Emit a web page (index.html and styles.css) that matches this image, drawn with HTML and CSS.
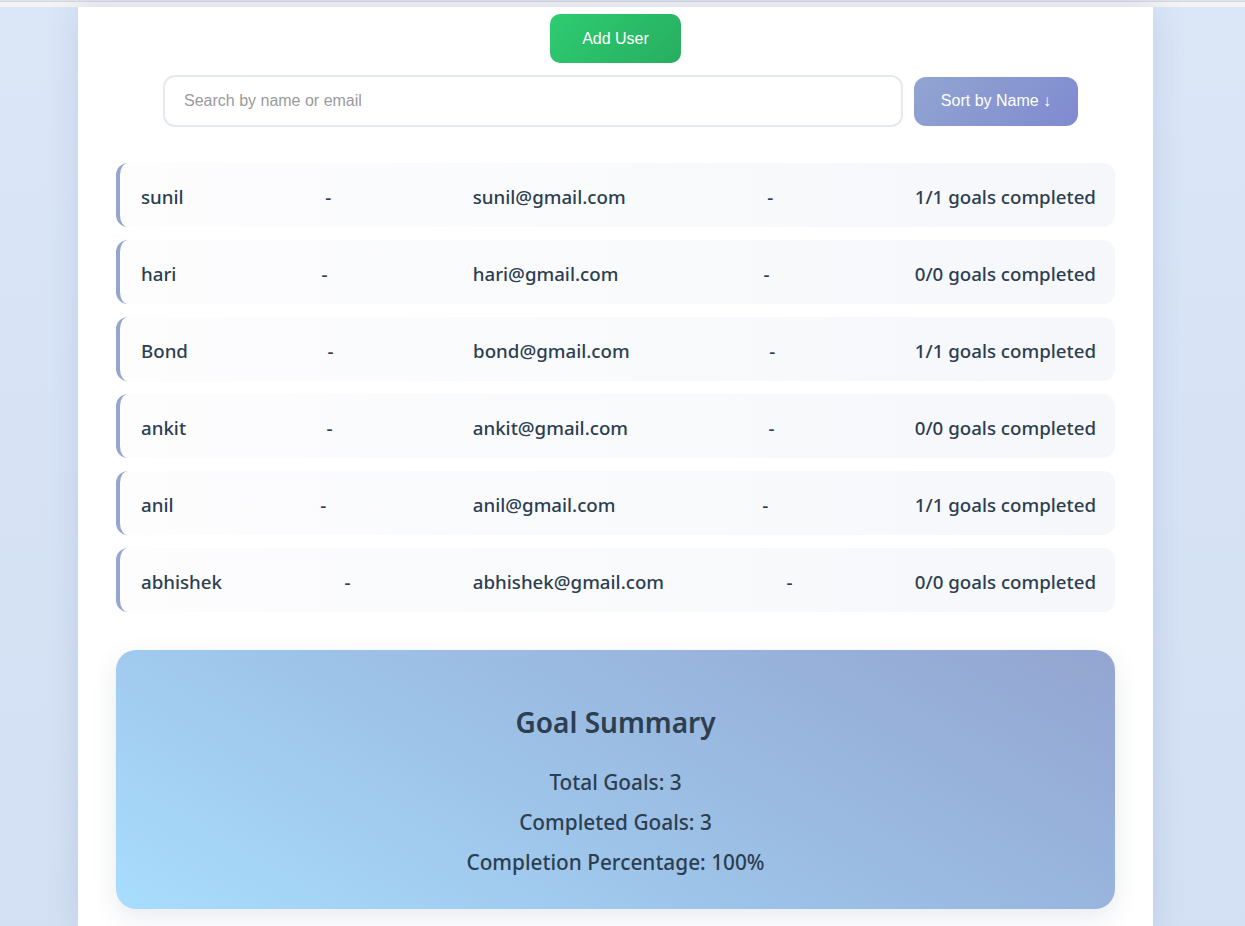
FILE: index.html
```html
<!DOCTYPE html>
<html>
<head>
<meta charset="utf-8">
<link rel="stylesheet" href="styles.css">
</head>
<body>
<div class="topbar"></div>
<div class="page">
  <main class="container">
    <div class="actions">
      <button class="add-btn">Add User</button>
    </div>
    <div class="search-row">
      <input class="search" type="text" placeholder="Search by name or email">
      <button class="sort-btn">Sort by Name ↓</button>
    </div>
    <ul class="users">
      <li class="user"><span>sunil</span><span>-</span><span>sunil@gmail.com</span><span>-</span><span>1/1 goals completed</span></li>
      <li class="user"><span>hari</span><span>-</span><span>hari@gmail.com</span><span>-</span><span>0/0 goals completed</span></li>
      <li class="user"><span>Bond</span><span>-</span><span>bond@gmail.com</span><span>-</span><span>1/1 goals completed</span></li>
      <li class="user"><span>ankit</span><span>-</span><span>ankit@gmail.com</span><span>-</span><span>0/0 goals completed</span></li>
      <li class="user"><span>anil</span><span>-</span><span>anil@gmail.com</span><span>-</span><span>1/1 goals completed</span></li>
      <li class="user"><span>abhishek</span><span>-</span><span>abhishek@gmail.com</span><span>-</span><span>0/0 goals completed</span></li>
    </ul>
    <section class="summary">
      <h2>Goal Summary</h2>
      <p>Total Goals: 3</p>
      <p>Completed Goals: 3</p>
      <p>Completion Percentage: 100%</p>
    </section>
  </main>
</div>
</body>
</html>
```

FILE: styles.css
```css
html, body {
  margin: 0;
  padding: 0;
  height: 100%;
}
body {
  background: linear-gradient(180deg, #dbe6f7 0%, #d3e0f3 100%);
  font-family: "Noto Sans", "Open Sans", sans-serif;
  overflow: hidden;
}
.topbar {
  height: 6px;
  background: #f3f3f3;
  border-top: 1px solid #d6d6d6;
  box-sizing: border-box;
  margin-top: 1px;
}
.page {
  padding: 0 92px 0 78px;
  height: calc(100% - 7px);
}
.container {
  background: #ffffff;
  width: 1075px;
  min-height: 100%;
  box-sizing: border-box;
  padding: 7px 38px 20px;
  box-shadow: 0 0 30px rgba(80, 110, 170, 0.18);
}
.actions {
  display: flex;
  justify-content: center;
}
.add-btn {
  width: 131px;
  height: 49px;
  border: none;
  border-radius: 10px;
  background: linear-gradient(135deg, #2ecc71, #27ae60);
  color: #ffffff;
  font-family: "Liberation Sans", Arial, sans-serif;
  font-size: 16px;
  cursor: pointer;
}
.search-row {
  display: flex;
  justify-content: center;
  align-items: center;
  gap: 11px;
  margin-top: 12px;
  padding-left: 10px;
}
.search {
  width: 740px;
  height: 52px;
  box-sizing: border-box;
  border: 2px solid #e4e8f0;
  border-radius: 12px;
  padding: 0 19px;
  font-family: "Liberation Sans", Arial, sans-serif;
  font-size: 16px;
  color: #333;
  outline: none;
}
.search::placeholder {
  color: #9a9a9a;
}
.sort-btn {
  width: 164px;
  height: 49px;
  border: none;
  border-radius: 12px;
  background: linear-gradient(135deg, #92a5d1, #7f8ad0);
  color: #ffffff;
  font-family: "Liberation Sans", Arial, sans-serif;
  font-size: 16px;
  cursor: pointer;
}
.users {
  list-style: none;
  margin: 36px 0 0;
  padding: 0;
  display: flex;
  flex-direction: column;
  gap: 13px;
}
.user {
  display: flex;
  justify-content: space-between;
  align-items: center;
  height: 64px;
  box-sizing: border-box;
  padding: 2px 19px 0 21px;
  border-left: 4px solid #94a6d0;
  border-radius: 12px;
  background: linear-gradient(90deg, #fdfdfe 0%, #f5f7fa 100%);
  color: #2c3e50;
  font-size: 18.7px;
  font-weight: 500;
}
.summary {
  margin-top: 38px;
  height: 259px;
  box-sizing: border-box;
  border-radius: 20px;
  background: linear-gradient(30deg, #a8ddfd 0%, #9dc2e7 45%, #93a5d0 100%);
  box-shadow: 0 8px 24px rgba(60, 80, 120, 0.12);
  text-align: center;
  color: #2c3e50;
  padding-top: 50px;
}
.summary h2 {
  margin: 0 0 18px;
  font-size: 28px;
  font-weight: 600;
  line-height: 44px;
}
.summary p {
  margin: 0;
  font-size: 20.8px;
  font-weight: 500;
  line-height: 40px;
}
```
